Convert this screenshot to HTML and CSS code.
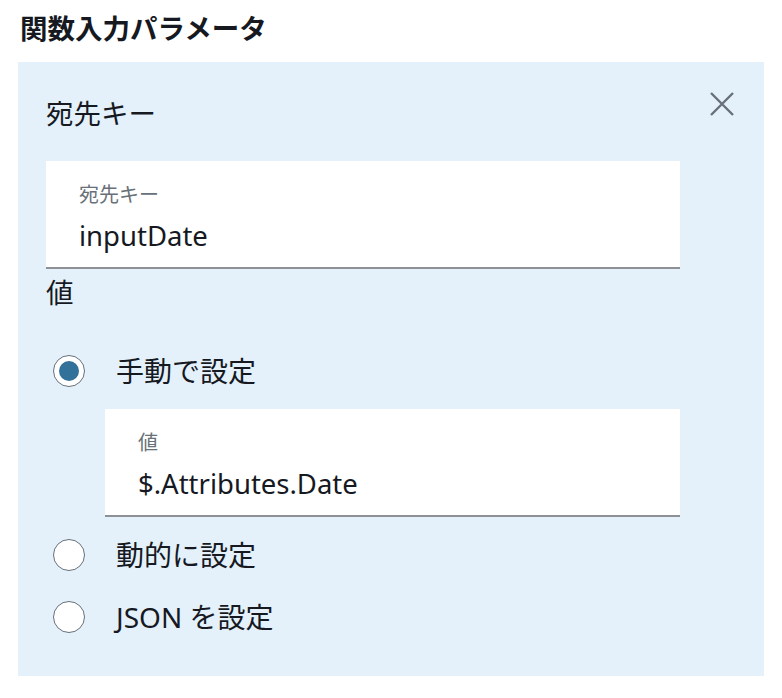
FILE: index.html
```html
<!DOCTYPE html>
<html lang="ja">
<head>
<meta charset="utf-8">
<title>関数入力パラメータ</title>
<link rel="stylesheet" href="styles.css">
</head>
<body>
<!--関数入力パラメータ-->
<h2 class="title">関数入力パラメータ</h2>

<div class="panel">
    <button class="close" type="button" aria-label="閉じる">
        <svg width="24" height="24" viewBox="0 0 24 24"><path d="M1 1L23 23M23 1L1 23" stroke="#687078" stroke-width="2.4" fill="none"/></svg>
    </button>

    <div class="panel-head">宛先キー</div>

    <div class="field">
        <div class="field-label">宛先キー</div>
        <div class="field-value">inputDate</div>
    </div>

    <div class="group-label">値</div>

    <!--値の設定方法-->
    <label class="radio radio-first">
        <span class="radio-dot on"></span>
        <span class="radio-text">手動で設定</span>
    </label>

    <div class="field field-sub">
        <div class="field-label">値</div>
        <div class="field-value">$.Attributes.Date</div>
    </div>

    <label class="radio radio-second">
        <span class="radio-dot"></span>
        <span class="radio-text">動的に設定</span>
    </label>
    <label class="radio radio-third">
        <span class="radio-dot"></span>
        <span class="radio-text">JSON を設定</span>
    </label>
</div>
</body>
</html>
```

FILE: styles.css
```css
body{margin:0; padding:0; background:#fff; color:#16191f; font-family:"Noto Sans","Noto Sans CJK JP",sans-serif;}

.title{margin:0; padding:10px 0 0 20px; height:62px; box-sizing:border-box; font-size:27.5px; line-height:38px; font-weight:bold;}

/*パネル*/
.panel{position:relative; margin-left:18px; width:746px; height:614px; box-sizing:border-box; padding:33px 84px 0 28px; background:#e4f1fb;}
.close{position:absolute; top:30px; right:30px; width:24px; height:24px; padding:0; border:none; background:none; cursor:pointer;}
.close svg{display:block;}

.panel-head{font-size:27.5px; line-height:38px;}

/*入力欄*/
.field{margin-top:28px; height:108px; box-sizing:border-box; padding:20px 0 0 33px; background:#fff; border-bottom:2px solid #8d9094;}
.field-label{font-size:20px; line-height:28px; color:#687078;}
.field-value{font-size:27.5px; line-height:38px; margin-top:8px;}
.field-sub{margin:18px 0 0 59px;}

.group-label{margin-top:5px; font-size:27.5px; line-height:38px;}

/*ラジオ*/
.radio{display:flex; align-items:center; height:40px; cursor:pointer;}
.radio-first{margin-top:39px;}
.radio-second{margin-top:18px;}
.radio-third{margin-top:22px;}
.radio-dot{width:32px; height:32px; margin:0 31px 0 7px; box-sizing:border-box; border:1px solid #687078; border-radius:50%; background:#fff; position:relative;}
.radio-dot.on::after{content:""; position:absolute; left:5px; top:5px; width:20px; height:20px; border-radius:50%; background:#327199;}
.radio-text{font-size:28px; line-height:38px;}
```
